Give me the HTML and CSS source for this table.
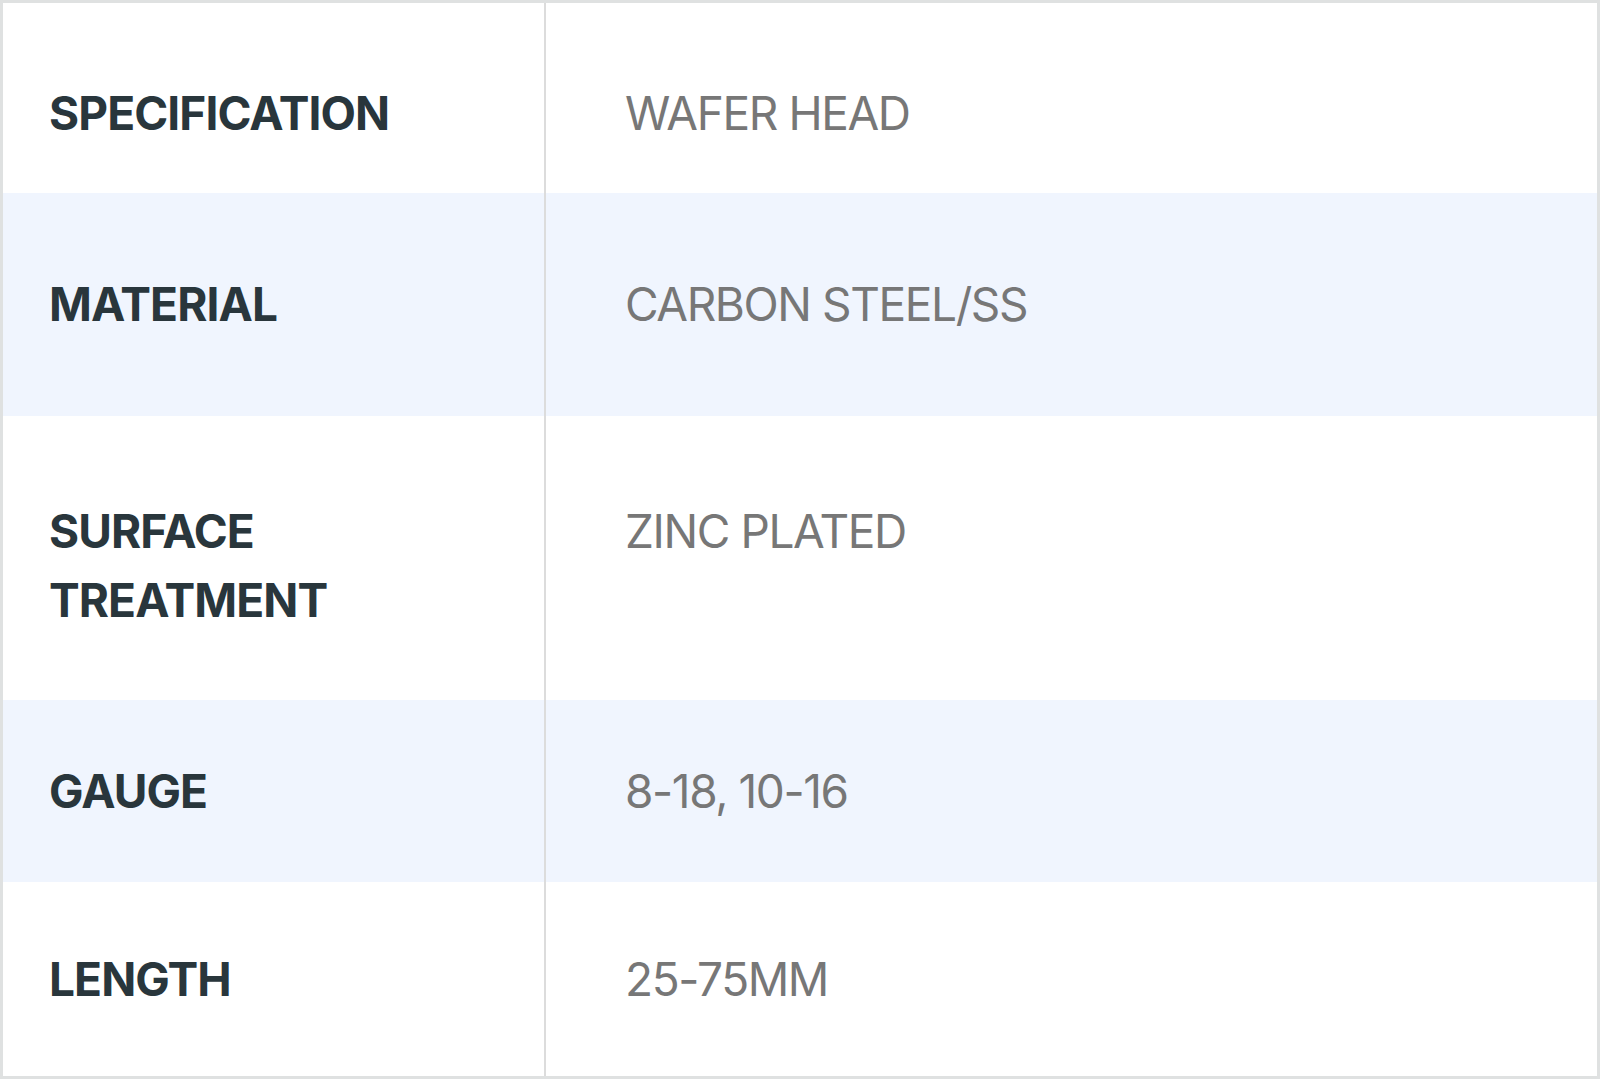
FILE: index.html
```html
<!DOCTYPE html>
<html lang="en">
<head>
<meta charset="utf-8">
<title>Specifications</title>
<link rel="stylesheet" href="styles.css">
</head>
<body>
<div class="spec-table">
  <div class="row row-first">
    <div class="cell label">SPECIFICATION</div>
    <div class="cell value">WAFER HEAD</div>
  </div>
  <div class="row row-alt row-material">
    <div class="cell label">MATERIAL</div>
    <div class="cell value">CARBON STEEL/SS</div>
  </div>
  <div class="row row-top row-surface">
    <div class="cell label">SURFACE<br>TREATMENT</div>
    <div class="cell value">ZINC PLATED</div>
  </div>
  <div class="row row-alt row-gauge">
    <div class="cell label">GAUGE</div>
    <div class="cell value">8-18, 10-16</div>
  </div>
  <div class="row row-length">
    <div class="cell label">LENGTH</div>
    <div class="cell value">25-75MM</div>
  </div>
</div>
</body>
</html>
```

FILE: styles.css
```css
html, body {
  margin: 0;
  padding: 0;
  background: #ffffff;
}

.spec-table {
  width: 1600px;
  height: 1079px;
  box-sizing: border-box;
  border: 3px solid #dfe1e1;
  display: flex;
  flex-direction: column;
  font-family: "Inter", "Liberation Sans", sans-serif;
  font-size: 46px;
  line-height: 69px;
}

.row {
  display: grid;
  grid-template-columns: 543px 1fr;
  background: #ffffff;
}

.row-alt {
  background: #f0f5fe;
}

.cell {
  display: flex;
  align-items: center;
  box-sizing: border-box;
}

.label {
  padding-left: 46px;
  color: #29363c;
  font-weight: 700;
  letter-spacing: -0.9px;
  border-right: 2px solid #dcdcdc;
}

.value {
  padding-left: 79px;
  color: #777777;
  font-weight: 400;
  letter-spacing: -1.4px;
}

.row-first { height: 190px; }
.row-first .cell { padding-top: 30px; }
.row-material { height: 223px; }
.row-surface { height: 284px; }
.row-surface .cell { align-items: flex-start; padding-top: 81px; }
.row-gauge { height: 182px; }
.row-length { height: 194px; }
```
